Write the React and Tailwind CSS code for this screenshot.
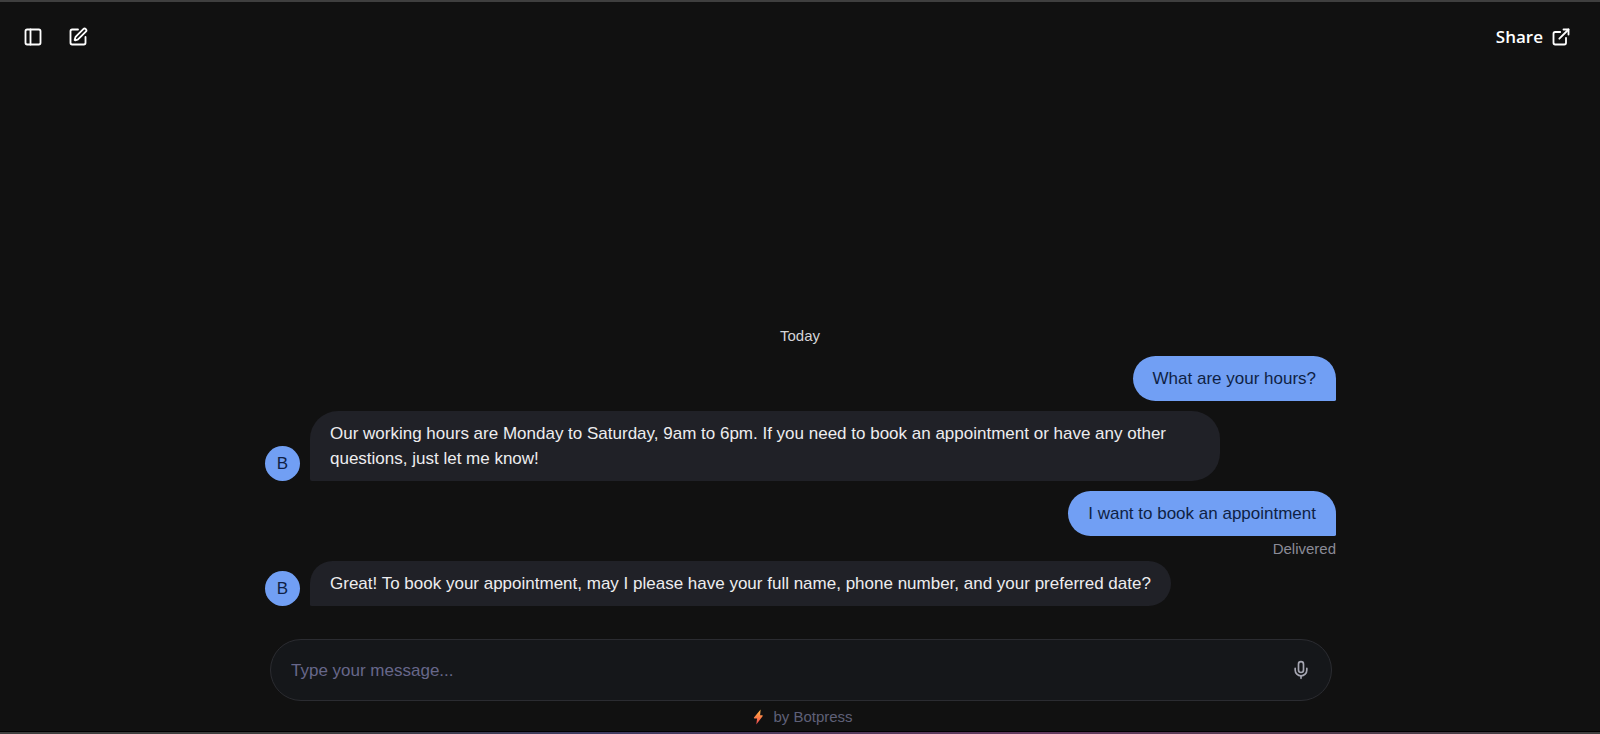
import { ExternalLink, Mic, PanelLeft, SquarePen } from "lucide-react";

const messages = [
  { from: "user", text: "What are your hours?" },
  {
    from: "bot",
    text: "Our working hours are Monday to Saturday, 9am to 6pm. If you need to book an appointment or have any other questions, just let me know!",
  },
  { from: "user", text: "I want to book an appointment", status: "Delivered" },
  {
    from: "bot",
    text: "Great! To book your appointment, may I please have your full name, phone number, and your preferred date?",
  },
];

function UserMessage({ text, status }) {
  return (
    <li className="flex flex-col items-end">
      <p className="rounded-[24px] rounded-br-[2px] bg-[#719ff4] px-5 py-2.5 text-[#0f1f45]">{text}</p>
      {status && <span className="-mb-2.5 text-[15px] leading-[25px] text-[#8b8b97]">{status}</span>}
    </li>
  );
}

function BotMessage({ text }) {
  return (
    <li className="flex items-end gap-2.5 pl-px">
      <span className="flex size-[35px] shrink-0 items-center justify-center rounded-full bg-[#719ff4] text-[#0f1f45]">B</span>
      <p className="max-w-[85%] rounded-[28px] rounded-bl-[2px] bg-[#202127] px-5 py-2.5 text-[#ededef]">{text}</p>
    </li>
  );
}

function Bolt() {
  return (
    <svg viewBox="0 0 12 16" className="h-4 w-3" aria-hidden="true">
      <defs>
        <linearGradient id="bolt" x1="0" y1="0" x2="0" y2="1">
          <stop offset="0" stopColor="#ffbe4a" />
          <stop offset="0.5" stopColor="#fd8045" />
          <stop offset="1" stopColor="#ec4253" />
        </linearGradient>
      </defs>
      <path d="M7.6.4 1 8.5c-.3.4-.1.9.4.9h2.7L3.3 15.6 9.6 7.2c.3-.4 0-.9-.4-.9H7.1z" fill="url(#bolt)" />
    </svg>
  );
}

export default function App() {
  return (
    <div className="flex min-h-screen flex-col border-t-2 border-[#3f3f3f] bg-[#111111] font-['Liberation_Sans',Arial,sans-serif]">
      <header className="flex items-center justify-between px-[23px] pt-5">
        <div className="flex gap-[25px] text-white">
          <button aria-label="Toggle sidebar" className="py-1">
            <PanelLeft size={20} strokeWidth={2.2} />
          </button>
          <button aria-label="New conversation" className="py-1">
            <SquarePen size={20} strokeWidth={2.2} />
          </button>
        </div>
        <button className="flex items-center gap-2 pr-1.5 font-['Open_Sans','Noto_Sans',sans-serif] text-[17px] leading-[30px] font-semibold text-white">
          Share
          <ExternalLink size={20} strokeWidth={2.2} />
        </button>
      </header>

      <main className="mx-auto flex w-full max-w-[1072px] flex-1 flex-col justify-end">
        <h2 className="pb-2 text-center text-[15px] leading-6 text-[#d4d4d8]">Today</h2>
        <ol className="flex flex-col gap-2.5 text-[17px] leading-[25px]">
          {messages.map((m) =>
            m.from === "user" ? <UserMessage key={m.text} {...m} /> : <BotMessage key={m.text} {...m} />
          )}
        </ol>
        <form className="mt-[33px] mr-1 ml-1.5 flex items-center rounded-full border border-[#2b2c31] bg-[#15171a] px-5 py-4">
          <input
            aria-label="Message"
            placeholder="Type your message..."
            className="h-7 min-w-0 flex-1 bg-transparent pt-0.5 text-[17px] text-white outline-none placeholder:text-[#67678a]"
          />
          <button type="button" aria-label="Record voice message" className="text-[#a5a6b2]">
            <Mic size={20} />
          </button>
        </form>
      </main>

      <footer className="flex items-center justify-center pt-1 pb-0.5">
        <a href="#botpress" className="flex items-center gap-2 pl-1.5 text-[15px] leading-6 text-[#5f6078]">
          <Bolt />
          by Botpress
        </a>
      </footer>
      <div className="h-[3px] border-t border-black bg-linear-to-r from-[#3f3f3f] from-20% via-[#3f3c63] via-37% to-[#3f3f3f]">
        <div className="h-full bg-linear-to-r from-transparent from-37% via-[#643a60] via-65% to-[#3f3f3f]" />
      </div>
    </div>
  );
}
